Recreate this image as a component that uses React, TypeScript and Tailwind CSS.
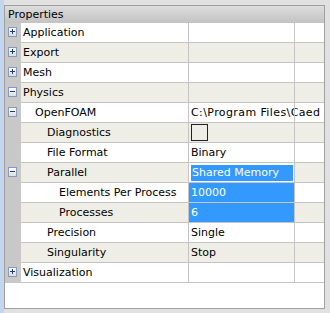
import React from "react";

type Row = {
  name: string;
  level: 0 | 1 | 2 | 3;
  icon?: "plus" | "minus";
  value?: string;
  checkbox?: boolean;
  editing?: boolean;
  selected?: boolean;
  path?: boolean;
};

const rows: Row[] = [
  { name: "Application", level: 0, icon: "plus" },
  { name: "Export", level: 0, icon: "plus" },
  { name: "Mesh", level: 0, icon: "plus" },
  { name: "Physics", level: 0, icon: "minus" },
  { name: "OpenFOAM", level: 1, icon: "minus", value: "C:\\Program Files\\Caed", path: true },
  { name: "Diagnostics", level: 2, checkbox: true },
  { name: "File Format", level: 2, value: "Binary" },
  { name: "Parallel", level: 2, icon: "minus", value: "Shared Memory", editing: true },
  { name: "Elements Per Process", level: 3, value: "10000", selected: true },
  { name: "Processes", level: 3, value: "6", selected: true },
  { name: "Precision", level: 2, value: "Single" },
  { name: "Singularity", level: 2, value: "Stop" },
  { name: "Visualization", level: 0, icon: "plus" },
];

const indent: Record<number, string> = {
  0: "pl-[2px]",
  1: "pl-[14px]",
  2: "pl-[26px]",
  3: "pl-[38px]",
};

function Expander({ kind }: { kind: "plus" | "minus" }) {
  return (
    <svg width="9" height="10" viewBox="0 0 9 10" className="block">
      <defs>
        <linearGradient id={`g-${kind}`} x1="0" y1="0" x2="0" y2="1">
          <stop offset="0" stopColor="#ffffff" />
          <stop offset="1" stopColor="#d8dde5" />
        </linearGradient>
      </defs>
      <rect x="0.5" y="0.5" width="8" height="9" fill={`url(#g-${kind})`} stroke="#8a9ab0" />
      <path d="M2 4.5h5" stroke="#1c3a8a" strokeWidth="1" />
      {kind === "plus" && <path d="M4.5 2v5" stroke="#1c3a8a" strokeWidth="1" />}
    </svg>
  );
}

function Value({ row }: { row: Row }) {
  if (row.checkbox) {
    return (
      <div className="w-[105px] h-[19px] pl-[2px] pt-[1px]">
        <div className="w-[17px] h-[17px] border border-[#222222]" />
      </div>
    );
  }
  if (row.editing) {
    return (
      <div className="w-[105px] h-[19px] bg-white pl-[2px] pt-[2px]">
        <div className="w-[102px] h-[16px] bg-[#3399ff] text-white leading-[16px] pl-[1px] whitespace-nowrap overflow-hidden">
          {row.value}
        </div>
      </div>
    );
  }
  if (row.selected) {
    return (
      <div className="w-[105px] h-[19px] bg-[#3399ff] text-white leading-[20px] pl-[2px] whitespace-nowrap">
        {row.value}
      </div>
    );
  }
  return (
    <div
      className={
        row.path
          ? "w-[105px] h-[19px] leading-[20px] pl-[2px] whitespace-nowrap tracking-[0.4px]"
          : "w-[105px] h-[19px] leading-[20px] pl-[2px] whitespace-nowrap"
      }
    >
      {row.value ?? ""}
    </div>
  );
}

export default function App() {
  return (
    <div className="flex w-[330px] h-[313px] bg-[#e1e1e1] font-['DejaVu_Sans',sans-serif] text-[11px] text-black overflow-hidden">
      <div className="w-[4px] h-full bg-[#c2d6ef]" />
      <div className="pt-[5px]">
        <div className="w-[321px] h-[304px] border border-[#a0a0a0] bg-white flex flex-col overflow-hidden">
          <div className="h-[17px] shrink-0 leading-[17px] pl-[3px] bg-linear-to-b from-[#dddddd] to-[#c3c3c3]">
            Properties
          </div>
          {rows.map((row, i) => (
            <div key={row.name} className="flex h-[20px] shrink-0">
              <div className="w-[16px] h-[20px] bg-[#c8c8c8] pl-[3px] pt-[4px]">
                {row.icon && <Expander kind={row.icon} />}
              </div>
              <div
                className={
                  i % 2 === 0
                    ? "flex flex-1 h-[20px] border-b border-[#c4c4c4] bg-white"
                    : "flex flex-1 h-[20px] border-b border-[#c4c4c4] bg-[#efeee6]"
                }
              >
                <div
                  className={`w-[168px] h-[19px] border-r border-[#c4c4c4] leading-[20px] whitespace-nowrap overflow-hidden ${indent[row.level]}`}
                >
                  {row.name}
                </div>
                <Value row={row} />
                <div className="flex-1 h-[19px] border-l border-[#c4c4c4]" />
              </div>
            </div>
          ))}
          <div className="flex-1 bg-white" />
        </div>
      </div>
    </div>
  );
}
